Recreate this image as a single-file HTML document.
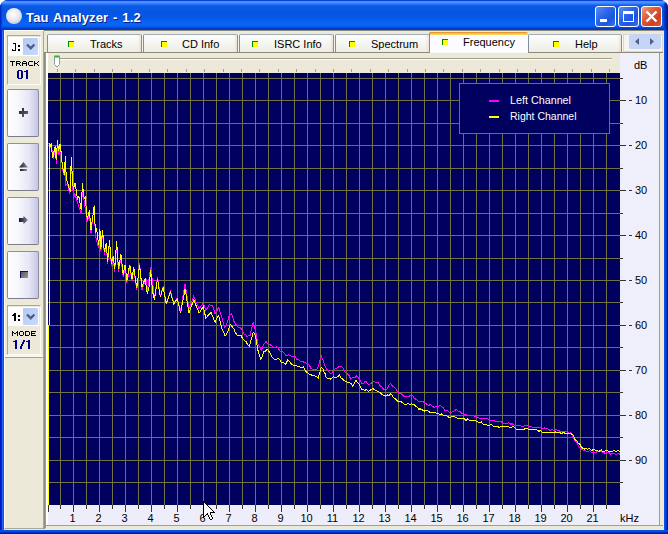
<!DOCTYPE html>
<html><head><meta charset="utf-8"><style>
*{margin:0;padding:0;box-sizing:border-box}
html,body{width:668px;height:534px;overflow:hidden;background:#fff;font-family:"Liberation Sans",sans-serif}
.a{position:absolute}
#win{position:absolute;left:0;top:0;width:668px;height:534px;border-radius:8px 8px 0 0;overflow:hidden;background:#0a4fe0}
#title{position:absolute;left:0;top:0;width:668px;height:30px;
 background:linear-gradient(180deg,#0a3fd8 0px,#0a3fd8 1px,#4592ff 1px,#4592ff 3px,#2a74f5 4px,#0b5ae6 6px,#0656e2 12px,#0658e6 18px,#0863f3 22px,#0a66f8 25px,#0556e8 27px,#0040d0 28px,#0036c0 30px)}
#frameL{position:absolute;left:0;top:30px;width:4px;height:504px;background:linear-gradient(90deg,#0019cf 0,#0019cf 1px,#0024d8 1px,#0024d8 2px,#2a6ae8 2px,#2a6ae8 3px,#0a54e4 3px)}
#frameR{position:absolute;left:664px;top:30px;width:4px;height:504px;background:linear-gradient(90deg,#0a54e4 0,#0a54e4 1px,#0648d8 1px,#0648d8 2px,#0030c8 2px,#0030c8 3px,#0019b0 3px)}
#frameB{position:absolute;left:0;top:530px;width:668px;height:4px;background:linear-gradient(180deg,#0a54e4 0,#0a54e4 1px,#0648d8 1px,#0648d8 2px,#0030c8 2px,#0030c8 3px,#0019b0 3px)}
#client{position:absolute;left:4px;top:30px;width:660px;height:500px;background:#ece9d8}
#ttl{position:absolute;left:26px;top:10px;font:bold 13px "Liberation Sans",sans-serif;color:#fff;text-shadow:1px 1px 0 #0a1e80;letter-spacing:0.15px;word-spacing:1px;white-space:pre}
.tbtn{position:absolute;top:6px;width:21px;height:21px;border:1px solid #fff;border-radius:3px;background:linear-gradient(135deg,#5a8cf8 0%,#2d66ea 40%,#1a55e0 70%,#3c72ea 100%)}
.tbtn.x{background:linear-gradient(135deg,#f0a080 0%,#e06040 35%,#d04020 70%,#d85a3a 100%)}
.tk{position:absolute;background:#333}
.lbl{position:absolute;font-size:11px;line-height:13px;color:#000;white-space:pre}
.lbl.c{text-align:center}
.stk{position:absolute;top:69px;width:1px;height:3px;background:#a0a090}
.tab{position:absolute;top:34px;height:18px;border:1px solid #7f8f9f;border-top-color:#a0aebb;border-bottom:none;border-radius:2px 2px 0 0;background:linear-gradient(180deg,#fdfdfd 0%,#f6f6f2 45%,#eeede7 100%);box-shadow:inset -3px 0 2px -1px rgba(235,200,160,0.35),1px 0 0 #f6f6f2}
.tab.sel{top:32px;height:21px;background:linear-gradient(180deg,#e89a32 0,#e89a32 1px,#fbbf3e 1px,#fbbf3e 2px,#fcd260 2px,#fcd260 3px,#fcfcfe 3px);border-color:#7f8f9f;border-top:none;border-right:none;border-radius:2px 2px 0 0;box-shadow:none}
.ticon{position:absolute;width:6px;height:6px;background:#ffff00;border-top:1px solid #008800;border-left:1px solid #008800}
.ttxt{position:absolute;font-size:11px;line-height:14px;color:#000;white-space:pre}
.btn{position:absolute;left:7px;width:32px;height:48px;border:1px solid #8e8e9e;border-bottom-color:#7c7c8c;border-radius:2px;background:linear-gradient(90deg,#fff 0%,#f6f6fc 35%,#e6e6f6 70%,#d2d2ec 88%,#c4c4e4 100%)}
.pix{position:absolute;font:bold 8px "Liberation Mono",monospace;color:#000;letter-spacing:0px}
</style></head><body>
<div id="win">
<div id="title"></div>
<div class="a" style="left:663px;top:3px;width:5px;height:27px;background:linear-gradient(90deg,rgba(0,40,190,0) 0,rgba(0,40,190,0.5) 1px,#0034c0 2px,#0026a8 3px,#001a90 5px)"></div>
<div class="a" style="left:0;top:4px;width:3px;height:26px;background:linear-gradient(90deg,#0028c8 0,#0028c8 1px,#0840dc 1px,#0840dc 2px,rgba(10,80,230,0.4) 2px,rgba(10,80,230,0) 3px)"></div>
<div id="frameL"></div><div id="frameR"></div><div id="frameB"></div>
<div id="client"></div>
<!-- title icon -->
<div class="a" style="left:6px;top:8px;width:16px;height:16px;border-radius:50%;background:radial-gradient(circle at 45% 40%,#fff 0%,#e8e8f0 45%,#b8b8c8 100%)"></div>
<div id="ttl">Tau Analyzer - 1.2</div>
<div class="tbtn" style="left:595px"><div class="a" style="left:4px;top:12px;width:7px;height:3px;background:#fff"></div></div>
<div class="tbtn" style="left:618px"><div class="a" style="left:4px;top:4px;width:11px;height:11px;border:1px solid #fff;border-top-width:3px"></div></div>
<div class="tbtn x" style="left:641px"><svg class="a" style="left:0;top:0" width="19" height="19"><path d="M4.5 4.5L14.5 14.5M14.5 4.5L4.5 14.5" stroke="#fff" stroke-width="2.4"/></svg></div>

<!-- left panel -->
<div class="a" style="left:4px;top:30px;width:40px;height:499px;border-left:1px solid #fff;border-top:1px solid #fff;border-right:1px solid #aca899;border-bottom:1px solid #aca899"></div>
<div class="a" style="left:7px;top:35px;width:34px;height:50px;border:1px solid #fbfaf3;border-left-color:#aca899;border-top-color:#aca899"></div>
<div class="a" style="left:8px;top:37px;width:31px;height:19px;background:#fff"></div>
<div class="a" style="left:23px;top:38px;width:15px;height:17px;background:linear-gradient(135deg,#b4c8f6,#c8dafc);border-radius:1px"></div>
<svg class="a" style="left:23px;top:38px" width="15" height="17"><path d="M4 6.5l3.7 3.7L11.4 6.5" stroke="#4d6185" stroke-width="2.4" fill="none"/></svg>
<svg class="a" style="left:0;top:0" width="24" height="60" shape-rendering="crispEdges" fill="#000"><path d="M13 43h3v1h-3z M15 44h1v7h-1z M12 50h3v1h-3z M12 49h1v1h-1z M18 45h1.6v2h-1.6z M18 49h1.6v2h-1.6z"/></svg>
<svg class="a" style="left:0;top:0" width="44" height="400" fill="#000" shape-rendering="crispEdges"><rect x="10" y="61" width="5" height="1"/><rect x="12" y="62" width="1" height="1"/><rect x="12" y="63" width="1" height="1"/><rect x="12" y="64" width="1" height="1"/><rect x="12" y="65" width="1" height="1"/><rect x="16" y="61" width="4" height="1"/><rect x="16" y="62" width="1" height="1"/><rect x="20" y="62" width="1" height="1"/><rect x="16" y="63" width="4" height="1"/><rect x="16" y="64" width="1" height="1"/><rect x="19" y="64" width="1" height="1"/><rect x="16" y="65" width="1" height="1"/><rect x="20" y="65" width="1" height="1"/><rect x="23" y="61" width="3" height="1"/><rect x="22" y="62" width="1" height="1"/><rect x="26" y="62" width="1" height="1"/><rect x="22" y="63" width="5" height="1"/><rect x="22" y="64" width="1" height="1"/><rect x="26" y="64" width="1" height="1"/><rect x="22" y="65" width="1" height="1"/><rect x="26" y="65" width="1" height="1"/><rect x="29" y="61" width="4" height="1"/><rect x="28" y="62" width="1" height="1"/><rect x="28" y="63" width="1" height="1"/><rect x="28" y="64" width="1" height="1"/><rect x="29" y="65" width="4" height="1"/><rect x="34" y="61" width="1" height="1"/><rect x="38" y="61" width="1" height="1"/><rect x="34" y="62" width="1" height="1"/><rect x="37" y="62" width="1" height="1"/><rect x="34" y="63" width="3" height="1"/><rect x="34" y="64" width="1" height="1"/><rect x="37" y="64" width="1" height="1"/><rect x="34" y="65" width="1" height="1"/><rect x="38" y="65" width="1" height="1"/></svg>
<svg class="a" style="left:0;top:0" width="44" height="400" fill="#00008a" shape-rendering="crispEdges"><rect x="18" y="70" width="4" height="1"/><rect x="17" y="71" width="2" height="1"/><rect x="21" y="71" width="2" height="1"/><rect x="17" y="72" width="2" height="1"/><rect x="21" y="72" width="2" height="1"/><rect x="17" y="73" width="2" height="1"/><rect x="21" y="73" width="2" height="1"/><rect x="17" y="74" width="2" height="1"/><rect x="21" y="74" width="2" height="1"/><rect x="17" y="75" width="2" height="1"/><rect x="21" y="75" width="2" height="1"/><rect x="17" y="76" width="2" height="1"/><rect x="21" y="76" width="2" height="1"/><rect x="17" y="77" width="2" height="1"/><rect x="21" y="77" width="2" height="1"/><rect x="18" y="78" width="4" height="1"/><rect x="26" y="70" width="2" height="1"/><rect x="24" y="71" width="4" height="1"/><rect x="26" y="72" width="2" height="1"/><rect x="26" y="73" width="2" height="1"/><rect x="26" y="74" width="2" height="1"/><rect x="26" y="75" width="2" height="1"/><rect x="26" y="76" width="2" height="1"/><rect x="26" y="77" width="2" height="1"/><rect x="26" y="78" width="2" height="1"/></svg>
<div class="btn" style="top:89px"><svg width="32" height="48" style="position:absolute;left:0;top:0"><defs><linearGradient id="gp" x1="0" y1="0" x2="1" y2="1"><stop offset="0" stop-color="#1a1a30"/><stop offset="1" stop-color="#707070"/></linearGradient></defs><path d="M11 21h9v3h-9z M14 18h2v9h-2z" fill="url(#gp)" shape-rendering="crispEdges"/></svg></div><div class="btn" style="top:143px"><svg width="32" height="48" style="position:absolute;left:0;top:0"><defs><linearGradient id="ge" x1="0" y1="0" x2="1" y2="0"><stop offset="0" stop-color="#181828"/><stop offset="1" stop-color="#909090"/></linearGradient></defs><path d="M15.5 18L20 23.5H11z" fill="url(#ge)"/><rect x="12" y="25" width="7" height="2" fill="url(#ge)"/></svg></div><div class="btn" style="top:197px"><svg width="32" height="48" style="position:absolute;left:0;top:0"><defs><linearGradient id="ga" x1="0" y1="0" x2="1" y2="0"><stop offset="0" stop-color="#10103a"/><stop offset="1" stop-color="#8a8a8a"/></linearGradient></defs><path d="M11 20H15.5V18L20 22L15.5 26V24H11z" fill="url(#ga)"/></svg></div><div class="btn" style="top:251px"><svg width="32" height="48" style="position:absolute;left:0;top:0" shape-rendering="crispEdges"><defs><linearGradient id="gs" x1="0" y1="0" x2="1" y2="1"><stop offset="0" stop-color="#505058"/><stop offset="1" stop-color="#9a9a9a"/></linearGradient></defs><rect x="12" y="19" width="8" height="7" fill="url(#gs)"/><path d="M12 19h8v1h-8z M12 19h1v7h-1z" fill="#10104a"/></svg></div>
<div class="a" style="left:7px;top:305px;width:34px;height:50px;border:1px solid #fbfaf3;border-left-color:#aca899;border-top-color:#aca899"></div>
<div class="a" style="left:8px;top:307px;width:31px;height:19px;background:#fff"></div>
<div class="a" style="left:23px;top:308px;width:15px;height:17px;background:linear-gradient(135deg,#b4c8f6,#c8dafc);border-radius:1px"></div>
<svg class="a" style="left:23px;top:308px" width="15" height="17"><path d="M4 6.5l3.7 3.7L11.4 6.5" stroke="#4d6185" stroke-width="2.4" fill="none"/></svg>
<svg class="a" style="left:0;top:0" width="24" height="330" shape-rendering="crispEdges" fill="#000"><path d="M14 313h2v8h-2z M13 314h1v2h-1z M12 315h1v1h-1z M18 315h2v2h-2z M18 319h2v2h-2z"/></svg>
<svg class="a" style="left:0;top:0" width="44" height="400" fill="#000" shape-rendering="crispEdges"><rect x="12" y="331" width="1" height="1"/><rect x="17" y="331" width="1" height="1"/><rect x="12" y="332" width="2" height="1"/><rect x="16" y="332" width="2" height="1"/><rect x="12" y="333" width="1" height="1"/><rect x="14" y="333" width="2" height="1"/><rect x="17" y="333" width="1" height="1"/><rect x="12" y="334" width="1" height="1"/><rect x="17" y="334" width="1" height="1"/><rect x="12" y="335" width="1" height="1"/><rect x="17" y="335" width="1" height="1"/><rect x="20" y="331" width="3" height="1"/><rect x="19" y="332" width="1" height="1"/><rect x="23" y="332" width="1" height="1"/><rect x="19" y="333" width="1" height="1"/><rect x="23" y="333" width="1" height="1"/><rect x="19" y="334" width="1" height="1"/><rect x="23" y="334" width="1" height="1"/><rect x="20" y="335" width="3" height="1"/><rect x="25" y="331" width="4" height="1"/><rect x="25" y="332" width="1" height="1"/><rect x="29" y="332" width="1" height="1"/><rect x="25" y="333" width="1" height="1"/><rect x="29" y="333" width="1" height="1"/><rect x="25" y="334" width="1" height="1"/><rect x="29" y="334" width="1" height="1"/><rect x="25" y="335" width="4" height="1"/><rect x="31" y="331" width="5" height="1"/><rect x="31" y="332" width="1" height="1"/><rect x="31" y="333" width="4" height="1"/><rect x="31" y="334" width="1" height="1"/><rect x="31" y="335" width="5" height="1"/></svg>
<svg class="a" style="left:0;top:0" width="44" height="400" fill="#00008a" shape-rendering="crispEdges"><rect x="15" y="340" width="2" height="1"/><rect x="13" y="341" width="4" height="1"/><rect x="15" y="342" width="2" height="1"/><rect x="15" y="343" width="2" height="1"/><rect x="15" y="344" width="2" height="1"/><rect x="15" y="345" width="2" height="1"/><rect x="15" y="346" width="2" height="1"/><rect x="15" y="347" width="2" height="1"/><rect x="15" y="348" width="2" height="1"/><rect x="23" y="340" width="2" height="1"/><rect x="23" y="341" width="2" height="1"/><rect x="22" y="342" width="2" height="1"/><rect x="22" y="343" width="2" height="1"/><rect x="21" y="344" width="2" height="1"/><rect x="21" y="345" width="2" height="1"/><rect x="20" y="346" width="2" height="1"/><rect x="20" y="347" width="2" height="1"/><rect x="20" y="348" width="2" height="1"/><rect x="28" y="340" width="2" height="1"/><rect x="26" y="341" width="4" height="1"/><rect x="28" y="342" width="2" height="1"/><rect x="28" y="343" width="2" height="1"/><rect x="28" y="344" width="2" height="1"/><rect x="28" y="345" width="2" height="1"/><rect x="28" y="346" width="2" height="1"/><rect x="28" y="347" width="2" height="1"/><rect x="28" y="348" width="2" height="1"/></svg>
<div class="a" style="left:5px;top:355px;width:38px;height:2px;background:#f8f7f0"></div><div class="a" style="left:5px;top:357px;width:38px;height:1px;background:#a5a290"></div>

<!-- tab control -->
<div class="a" style="left:44px;top:30px;width:620px;height:1px;background:#8c8a78"></div>
<div class="tab" style="left:47px;width:95px"></div><div class="ticon" style="left:68px;top:41px"></div><div class="ttxt" style="left:90px;top:37px">Tracks</div><div class="tab" style="left:143px;width:95px"></div><div class="ticon" style="left:161px;top:41px"></div><div class="ttxt" style="left:182px;top:37px">CD Info</div><div class="tab" style="left:239px;width:95px"></div><div class="ticon" style="left:252px;top:41px"></div><div class="ttxt" style="left:274px;top:37px">ISRC Info</div><div class="tab" style="left:335px;width:95px"></div><div class="ticon" style="left:349px;top:41px"></div><div class="ttxt" style="left:371px;top:37px">Spectrum</div><div class="tab" style="left:528px;width:94px"></div><div class="ticon" style="left:553px;top:41px"></div><div class="ttxt" style="left:575px;top:37px">Help</div><div class="tab sel" style="left:429px;width:99px"></div><div class="ticon" style="left:442px;top:39px"></div><div class="ttxt" style="left:463px;top:35px">Frequency</div>
<!-- tab scroller -->
<div class="a" style="left:623px;top:34px;width:40px;height:18px;border:1px solid #d8d8d0;background:#f4f4f0"></div>
<div class="a" style="left:629px;top:34px;width:32px;height:15px;background:#c6d4f6;border-radius:2px"></div>
<svg class="a" style="left:629px;top:34px" width="32" height="15"><path d="M10 4v7l-4-3.5z M21 4v7l4-3.5z" fill="#4d6185"/></svg>
<!-- tab page -->
<div class="a" style="left:44px;top:52px;width:619px;height:477px;border-top:1px solid #8c8a78;border-left:1px solid #8c8a78"></div>
<div class="a" style="left:45px;top:53px;width:617px;height:475px;background:#ece9d8;border-left:1px solid #a0a090"></div>
<div class="a" style="left:46px;top:53px;width:2px;height:473px;background:#fff"></div>
<div class="a" style="left:430px;top:52px;width:98px;height:1px;background:#f8f8f6"></div>
<!-- lavender axis panels -->
<div class="a" style="left:620px;top:53px;width:40px;height:473px;background:#efeffb;border-right:1px solid #a0a090"></div>
<div class="a" style="left:48px;top:505px;width:572px;height:21px;background:#eeeefa"></div>
<div class="a" style="left:44px;top:525px;width:619px;height:1px;background:#a0a090"></div>
<!-- slider -->
<div class="a" style="left:54px;top:58px;width:558px;height:2px;border-top:1px solid #9d9b8c;border-bottom:1px solid #fff;border-radius:1px"></div>
<div class="stk" style="left:57px"></div><div class="stk" style="left:75px"></div><div class="stk" style="left:94px"></div><div class="stk" style="left:112px"></div><div class="stk" style="left:131px"></div><div class="stk" style="left:149px"></div><div class="stk" style="left:167px"></div><div class="stk" style="left:186px"></div><div class="stk" style="left:204px"></div><div class="stk" style="left:223px"></div><div class="stk" style="left:241px"></div><div class="stk" style="left:259px"></div><div class="stk" style="left:278px"></div><div class="stk" style="left:296px"></div><div class="stk" style="left:315px"></div><div class="stk" style="left:333px"></div><div class="stk" style="left:351px"></div><div class="stk" style="left:370px"></div><div class="stk" style="left:388px"></div><div class="stk" style="left:407px"></div><div class="stk" style="left:425px"></div><div class="stk" style="left:443px"></div><div class="stk" style="left:462px"></div><div class="stk" style="left:480px"></div><div class="stk" style="left:499px"></div><div class="stk" style="left:517px"></div><div class="stk" style="left:535px"></div><div class="stk" style="left:554px"></div><div class="stk" style="left:572px"></div><div class="stk" style="left:591px"></div><div class="stk" style="left:609px"></div>
<svg class="a" style="left:53px;top:55px" width="8" height="13"><path d="M1.5 1.5h5v8l-2.5 2.5l-2.5-2.5z" fill="#fff" stroke="#8c9aa8"/><path d="M1.5 1.5h5" stroke="#2fb02f" stroke-width="2"/></svg>
<svg width="572" height="432" viewBox="48 73 572 432" style="position:absolute;left:48px;top:73px" shape-rendering="crispEdges"><rect x="48" y="73" width="572" height="432" fill="#00005e"/><path d="M48 78.5H620M48 100.5H620M48 123.5H620M48 145.5H620M48 168.5H620M48 190.5H620M48 213.5H620M48 235.5H620M48 258.5H620M48 280.5H620M48 302.5H620M48 325.5H620M48 347.5H620M48 370.5H620M48 392.5H620M48 415.5H620M48 437.5H620M48 460.5H620M48 482.5H620M60.5 73V505M73.5 73V505M86.5 73V505M99.5 73V505M112.5 73V505M125.5 73V505M138.5 73V505M151.5 73V505M164.5 73V505M177.5 73V505M190.5 73V505M203.5 73V505M216.5 73V505M229.5 73V505M242.5 73V505M255.5 73V505M268.5 73V505M281.5 73V505M294.5 73V505M307.5 73V505M320.5 73V505M333.5 73V505M346.5 73V505M359.5 73V505M372.5 73V505M385.5 73V505M398.5 73V505M411.5 73V505M424.5 73V505M437.5 73V505M450.5 73V505M463.5 73V505M476.5 73V505M489.5 73V505M502.5 73V505M515.5 73V505M528.5 73V505M541.5 73V505M554.5 73V505M567.5 73V505M580.5 73V505M593.5 73V505M606.5 73V505" stroke="#727244" stroke-width="1" fill="none"/><polyline points="48.5,143 50.6,147 52,150 53.2,158.8 55,150 56.5,164 57.5,145 59,155 60.2,147 62,163 63,171 64.3,175.9 65.5,160 65.7,185 67.6,184 69.6,194.2 71.3,162 72.2,177 73.5,200 74.8,193 77.5,203 81.2,213 82.4,190 84.2,201 87.2,222 89.4,213 91,233 94.2,205 95.4,236 98.7,248 99.9,231 100.9,251 102.6,232 104.4,255 106.3,245 107.6,264 109.5,243 111.4,266 113.2,258 114.7,272 116.6,244 118.5,272 120.9,257 123.2,277 125,267 126.9,283 129.7,267 132,281 133.8,270 136.8,290 139.6,263 141.9,290 145.1,281 146,279.4 147.3,291.2 150.7,266.8 154.4,298 157.5,276.9 160.3,296.3 163.2,286.2 166.2,303 170.4,291.2 173.8,303 177.2,298 180.6,310.6 185.1,283.7 189,308.9 193.7,296.3 199.1,308.9 203.3,303 205.8,310.6 209.2,304.7 212.6,305.6 215.1,314 216.9,310.6 218.8,307.2 220.7,314.5 222.5,319.7 224.4,327.5 226.2,324.8 228,320 229.0,316.5 230,315 231.5,313.5 232.6,316.8 233.7,321 234.8,322.4 236,324.7 237.1,325.7 238.2,327.7 239.7,327.5 241.2,328.4 242.7,331.4 244.2,334.4 245.7,334.5 247.2,336.7 248.7,335.4 250.2,335.2 251.7,327.9 253.2,322.5 254.3,325.8 255.4,330 256.6,336.2 257.7,343.4 259.5,347.2 261.4,350.1 262.9,346.1 264.4,343.7 265.9,341.2 267.8,343.7 269.7,344.2 271.5,345.7 273.4,347.2 274.9,347.9 276.4,346.7 277.9,347.9 279.8,350.8 281.6,351.6 283.1,352.1 284.6,353.6 286.1,356.1 288.0,354.8 289.9,355.4 291.8,356.2 293.6,356.1 295.1,356.6 296.6,359.1 298.5,359.8 300.4,361.4 302.2,361.8 304.1,362.1 306.0,362.8 307.8,364.4 309.3,365.2 310.8,368.1 312.3,369.4 313.8,369.6 315.7,369.2 317.6,368.9 319.5,362.0 321.3,356.1 323.2,360.5 325.1,365.9 326,367.7 327.5,370.2 329.0,371.7 330.5,373.7 332.0,372.9 333.5,370 335.4,368.9 337.2,367.7 338.7,366.9 340.2,366.2 341.7,366.9 343.2,368.5 345.1,372.1 347,373.7 348.9,375.4 350.7,379 352.5,377.8 354.4,377.5 355.5,377.2 356.7,376 357.8,376.5 358.9,379 360.4,381.2 361.9,383.4 363.4,383.9 364.9,381.5 366.4,382 367.9,384.1 369.4,384.2 370.9,383.7 372.4,381.7 373.9,381.2 375.4,382.2 376.9,382.2 378.4,382.7 380.2,385.9 382.1,387.2 384.0,389.7 385.9,390.2 387.4,388.4 388.9,385.2 390.4,383.4 392.2,385.8 394.1,387.2 395.9,388.7 397.6,391.7 399.4,393.2 400.9,393.2 402.3,394.7 403.8,396.2 405.3,396.4 406.8,396.2 408.3,396.9 409.8,395.9 411.3,395.9 412.8,395.4 414.3,398.3 415.8,399.2 417.3,400.4 418.8,401.7 420.3,401.4 422.2,401.2 424.1,402.4 426,403.7 427.4,404.9 428.9,405.2 430.4,404.7 432.0,406.1 433.6,407.1 435.1,407.1 436.7,406.0 438.3,406.8 439.9,405.2 441.5,406.4 443.0,407.5 444.6,410.2 446.2,410.2 447.8,410.3 449.3,412.8 450.9,412.4 452.8,411.9 454.6,410.8 456.5,409.3 458.3,411.2 460.1,411.5 461.9,413.4 463.8,413.9 465.8,414.5 467.8,415.6 469.7,415.6 471.7,416.0 473.6,415.4 475.6,416.8 477.6,417.2 479.6,418.1 481.5,418.4 483.4,418.3 485.4,418.7 487.4,418.6 489.4,420.0 491.3,420.9 493.3,420.3 495.3,421.2 497.2,422.1 499.2,421.0 501.2,421.9 503.1,423.3 505.0,423.3 506.8,423.7 508.7,422.7 510.6,424.1 512.5,423.9 514.4,425.2 516.2,425.0 518.1,425.8 520,425.6 521.9,426.3 523.8,426.0 525.7,425.7 527.6,425.4 529.5,426.6 531.4,426.3 533.3,428.0 535.1,427.6 537.0,427.8 538.9,427.5 540.8,427.8 542.7,428.6 544.5,428.0 546.4,428.3 548.3,429.1 550.2,430.4 552.1,429.1 554.0,430.9 555.9,429.1 557.8,430.4 559.7,431.1 561.6,431.3 563.4,431.4 565.3,431.6 567.2,431.3 569.1,433.1 571,432.9 572.3,435.0 573.7,438.6 575,440.7 576.6,442.1 578.2,445.6 579.8,448 581.3,448.8 582.9,450.1 584.5,450.8 586,451.1 587.9,451.4 589.8,450.6 591.7,452.4 593.6,453.1 595.5,452.4 597.4,451.6 599.3,451.8 601.1,451.9 603.0,452.1 604.9,453.3 606.9,452.8 608.8,452.3 610.8,454.3 612.8,453.3 614.6,453.6 616.4,454.8 618.2,453.1 620,454.3" fill="none" stroke="#ff00ff" stroke-width="1" shape-rendering="crispEdges"/><polyline points="48.5,143 49.9,143.1 50.6,147 51.5,143.1 52.3,157.5 53.2,156.2 54.1,151 55.2,145.7 56.2,160.1 57.5,140.5 58.5,151 59.4,147 60.2,143.8 61.1,152.3 62,161.5 63,169.3 64.3,174.6 65.4,155.6 66.3,179.8 67.6,182.4 68.9,187.7 70.2,191.6 71.3,157.5 72.2,174.6 73.3,189.5 75.2,182.7 77.5,200 78.8,196 81.2,210.4 82.4,183.5 84.2,198.5 85.2,197 87.2,219.4 89.4,210.4 91,230 94.2,206 95.4,233 96.5,228 98.7,245 99.9,229.2 100.9,248.7 102.6,230 104.4,252.4 106.3,243.1 107.6,261.8 109.5,240.3 111.4,263.7 113.2,256.2 114.7,269.3 116.6,241.2 118.5,269.3 120.9,254.3 123.2,274.9 125,264.6 126.9,280.5 129.7,264.6 132,278.7 133.8,267.4 136.8,288 139.6,264.6 141.9,287.1 145.1,278.7 147.3,293.8 149,287 150.7,270.2 152.7,292.1 154.4,299.7 157.5,278.6 160.3,297.1 163.2,287 166.2,303.9 170.4,292.1 173.8,303.9 177.2,298.8 180.6,313.1 185.1,288.7 189,313.1 193.7,299.7 199.1,313.1 203.3,306.4 205.8,318.2 210.9,312.3 215.1,322.4 216.8,318.0 218.5,315.7 220.2,321.4 222,329 223.4,331.4 224.9,335.9 226.4,334.4 228,331 229.0,327.9 230,324.7 231.5,325.4 232.6,327.9 233.7,328.4 235.2,332.4 236.7,334.4 237.8,335.6 239,335.9 240.1,335.9 241.2,335.9 242.7,338.6 244.2,340.4 246.0,341.4 247.7,344.9 249.5,346.4 251.3,339.3 253.2,332.2 254.3,333.5 255.4,335.9 256.6,342.1 257.7,349.4 259.2,354.8 260.7,359.1 262.2,356.4 263.7,351.6 265.5,351.0 267.4,349.4 269.3,351.9 271.2,355.4 272.7,357.8 274.2,359.1 276.0,359.8 277.9,358.4 279.8,359.6 281.6,362.9 283.5,362.6 285.4,364.4 286.5,363.1 287.6,359.9 289.1,360.9 290.6,362.9 292.5,365.0 294.4,365.1 296.2,365.4 298.1,366.6 300.0,366.9 301.9,368.1 303.4,366.6 304.9,369.8 306.3,371.9 307.8,372.9 309.3,374.4 310.8,374.9 312.7,375.2 314.6,375.6 316.5,376.7 318.3,377.8 319.8,372.6 321.3,367.4 322.8,368.9 324.3,372.4 325.8,374.9 326,376.7 327.5,378.5 329.0,378.2 330.5,379 332.0,377.9 333.5,376.7 335.0,377.6 336.5,377.5 338.0,376.5 339.5,374.5 341.0,377.8 342.5,379 344.0,380.5 345.5,381.5 347,382 348.9,382.7 350.7,383.4 351.8,384.4 352.9,386.4 354.4,382.9 355.9,380.4 357.4,382.4 358.9,383.4 360.4,387.4 361.9,389.4 363.4,389.9 364.9,390.4 366.4,389.4 367.9,391.1 369.4,390.9 371.3,389.3 373.2,388.7 374.6,389.8 376.1,390.9 377.6,391.2 379.1,391.9 380.6,393.2 382.4,394.7 384.1,395.2 385.9,396.2 387.4,394.9 388.9,395.7 390.4,393.9 391.9,394.9 393.4,397.4 394.9,398.4 396.4,399.9 397.9,401.4 399.4,401.4 400.9,401.7 402.3,402.4 403.8,403.7 405.3,404.7 406.8,404.2 408.3,403.7 409.8,404.4 411.3,403.7 412.8,404.4 414.3,404.9 415.8,406.4 417.3,407.4 418.8,409.1 420.3,408.9 421.8,409.6 423.2,410.4 424.6,411.1 426,410.4 427.4,410.4 428.9,411.5 430.4,412.7 432.0,412.9 433.6,412.7 435.1,412.4 436.7,413.3 438.2,413.7 439.8,414.1 441.4,414 443.0,415.1 444.5,415.8 446.1,415.4 447.7,416.5 449.7,417.7 451.6,416.9 453.6,416.5 455.6,417.2 457.2,418.1 458.8,418.9 460.3,418.8 461.9,418.7 463.8,418.1 465.8,420.5 467.8,418.9 469.7,420.3 471.7,420.7 473.6,420.1 475.6,420.5 477.6,421.9 479.6,422.9 481.5,422.0 483.4,424.6 485.4,424.1 487.4,425.1 489.4,425.1 491.3,424.5 493.3,426 495.3,426.6 497.2,426.3 499.2,427.5 501.2,426.6 503.1,426.8 505.0,427.0 506.8,426.1 508.7,426.8 510.6,427.5 512.5,426.8 514.4,427.1 516.2,429.5 518.1,429.8 520,429.1 521.9,429.2 523.8,429.3 525.7,428.5 527.6,428.6 529.5,429.7 531.4,429.0 533.3,429.3 535.1,429.7 537.0,430.0 538.9,431.3 540.8,430.5 542.7,432.7 544.5,432.8 546.4,432.0 548.3,432.2 550.2,432.3 552.1,432.5 554.0,433.1 555.9,431.8 557.8,432.9 559.7,432.5 561.6,433.6 563.4,432.3 565.3,433.4 567.2,433.5 568.8,433.8 570.3,433.1 571.9,434.4 573.5,435.5 575.0,439.6 576.6,440.7 578.2,443.3 579.7,443.9 581.3,447 582.9,448.6 584.5,449.1 586.0,448.1 587.6,449.2 589.6,448.4 591.5,450.7 593.5,449.4 595.5,450.2 597.4,450.9 599.3,451.1 601.1,449.7 603.0,451.9 604.9,451.1 606.9,450.6 608.8,451.6 610.8,451.1 612.8,451.1 614.6,450.8 616.4,451.4 618.2,450.6 620,451.7" fill="none" stroke="#ffff00" stroke-width="1" shape-rendering="crispEdges"/><rect x="49" y="143" width="1" height="182" fill="#ffff00"/><rect x="48" y="325" width="1" height="180" fill="#ffff00"/><rect x="49" y="325" width="1" height="1" fill="#ff00ff"/><rect x="459.5" y="83.5" width="150" height="50" fill="#00005e" stroke="#727244" stroke-width="1"/><rect x="489" y="100" width="10" height="2" fill="#ff00ff"/><rect x="489" y="116" width="10" height="2" fill="#ffff00"/><text x="510" y="104" fill="#fff" font-family="Liberation Sans" font-size="11" textLength="61" lengthAdjust="spacingAndGlyphs">Left Channel</text><text x="510" y="120" fill="#fff" font-family="Liberation Sans" font-size="11" textLength="66.5" lengthAdjust="spacingAndGlyphs">Right Channel</text></svg>
<div class="tk" style="left:620px;top:78px;width:3px;height:1px"></div><div class="tk" style="left:620px;top:100px;width:6px;height:1px"></div><div class="tk" style="left:620px;top:123px;width:3px;height:1px"></div><div class="tk" style="left:620px;top:145px;width:6px;height:1px"></div><div class="tk" style="left:620px;top:168px;width:3px;height:1px"></div><div class="tk" style="left:620px;top:190px;width:6px;height:1px"></div><div class="tk" style="left:620px;top:213px;width:3px;height:1px"></div><div class="tk" style="left:620px;top:235px;width:6px;height:1px"></div><div class="tk" style="left:620px;top:258px;width:3px;height:1px"></div><div class="tk" style="left:620px;top:280px;width:6px;height:1px"></div><div class="tk" style="left:620px;top:302px;width:3px;height:1px"></div><div class="tk" style="left:620px;top:325px;width:6px;height:1px"></div><div class="tk" style="left:620px;top:347px;width:3px;height:1px"></div><div class="tk" style="left:620px;top:370px;width:6px;height:1px"></div><div class="tk" style="left:620px;top:392px;width:3px;height:1px"></div><div class="tk" style="left:620px;top:415px;width:6px;height:1px"></div><div class="tk" style="left:620px;top:437px;width:3px;height:1px"></div><div class="tk" style="left:620px;top:460px;width:6px;height:1px"></div><div class="tk" style="left:620px;top:482px;width:3px;height:1px"></div><div class="tk" style="left:629px;top:100px;width:3px;height:1px"></div><div class="lbl" style="left:635px;top:94px">10</div><div class="tk" style="left:629px;top:145px;width:3px;height:1px"></div><div class="lbl" style="left:635px;top:139px">20</div><div class="tk" style="left:629px;top:190px;width:3px;height:1px"></div><div class="lbl" style="left:635px;top:184px">30</div><div class="tk" style="left:629px;top:235px;width:3px;height:1px"></div><div class="lbl" style="left:635px;top:229px">40</div><div class="tk" style="left:629px;top:280px;width:3px;height:1px"></div><div class="lbl" style="left:635px;top:274px">50</div><div class="tk" style="left:629px;top:325px;width:3px;height:1px"></div><div class="lbl" style="left:635px;top:319px">60</div><div class="tk" style="left:629px;top:370px;width:3px;height:1px"></div><div class="lbl" style="left:635px;top:364px">70</div><div class="tk" style="left:629px;top:415px;width:3px;height:1px"></div><div class="lbl" style="left:635px;top:409px">80</div><div class="tk" style="left:629px;top:460px;width:3px;height:1px"></div><div class="lbl" style="left:635px;top:454px">90</div><div class="lbl" style="left:634px;top:59px">dB</div><div class="tk" style="left:48px;top:505px;width:1px;height:7px"></div><div class="tk" style="left:60px;top:505px;width:1px;height:4px"></div><div class="tk" style="left:73px;top:505px;width:1px;height:7px"></div><div class="lbl c" style="left:62px;top:512px;width:21px">1</div><div class="tk" style="left:86px;top:505px;width:1px;height:4px"></div><div class="tk" style="left:99px;top:505px;width:1px;height:7px"></div><div class="lbl c" style="left:88px;top:512px;width:21px">2</div><div class="tk" style="left:112px;top:505px;width:1px;height:4px"></div><div class="tk" style="left:125px;top:505px;width:1px;height:7px"></div><div class="lbl c" style="left:114px;top:512px;width:21px">3</div><div class="tk" style="left:138px;top:505px;width:1px;height:4px"></div><div class="tk" style="left:151px;top:505px;width:1px;height:7px"></div><div class="lbl c" style="left:140px;top:512px;width:21px">4</div><div class="tk" style="left:164px;top:505px;width:1px;height:4px"></div><div class="tk" style="left:177px;top:505px;width:1px;height:7px"></div><div class="lbl c" style="left:166px;top:512px;width:21px">5</div><div class="tk" style="left:190px;top:505px;width:1px;height:4px"></div><div class="tk" style="left:203px;top:505px;width:1px;height:7px"></div><div class="lbl c" style="left:192px;top:512px;width:21px">6</div><div class="tk" style="left:216px;top:505px;width:1px;height:4px"></div><div class="tk" style="left:229px;top:505px;width:1px;height:7px"></div><div class="lbl c" style="left:218px;top:512px;width:21px">7</div><div class="tk" style="left:242px;top:505px;width:1px;height:4px"></div><div class="tk" style="left:255px;top:505px;width:1px;height:7px"></div><div class="lbl c" style="left:244px;top:512px;width:21px">8</div><div class="tk" style="left:268px;top:505px;width:1px;height:4px"></div><div class="tk" style="left:281px;top:505px;width:1px;height:7px"></div><div class="lbl c" style="left:270px;top:512px;width:21px">9</div><div class="tk" style="left:294px;top:505px;width:1px;height:4px"></div><div class="tk" style="left:307px;top:505px;width:1px;height:7px"></div><div class="lbl c" style="left:296px;top:512px;width:21px">10</div><div class="tk" style="left:320px;top:505px;width:1px;height:4px"></div><div class="tk" style="left:333px;top:505px;width:1px;height:7px"></div><div class="lbl c" style="left:322px;top:512px;width:21px">11</div><div class="tk" style="left:346px;top:505px;width:1px;height:4px"></div><div class="tk" style="left:359px;top:505px;width:1px;height:7px"></div><div class="lbl c" style="left:348px;top:512px;width:21px">12</div><div class="tk" style="left:372px;top:505px;width:1px;height:4px"></div><div class="tk" style="left:385px;top:505px;width:1px;height:7px"></div><div class="lbl c" style="left:374px;top:512px;width:21px">13</div><div class="tk" style="left:398px;top:505px;width:1px;height:4px"></div><div class="tk" style="left:411px;top:505px;width:1px;height:7px"></div><div class="lbl c" style="left:400px;top:512px;width:21px">14</div><div class="tk" style="left:424px;top:505px;width:1px;height:4px"></div><div class="tk" style="left:437px;top:505px;width:1px;height:7px"></div><div class="lbl c" style="left:426px;top:512px;width:21px">15</div><div class="tk" style="left:450px;top:505px;width:1px;height:4px"></div><div class="tk" style="left:463px;top:505px;width:1px;height:7px"></div><div class="lbl c" style="left:452px;top:512px;width:21px">16</div><div class="tk" style="left:476px;top:505px;width:1px;height:4px"></div><div class="tk" style="left:489px;top:505px;width:1px;height:7px"></div><div class="lbl c" style="left:478px;top:512px;width:21px">17</div><div class="tk" style="left:502px;top:505px;width:1px;height:4px"></div><div class="tk" style="left:515px;top:505px;width:1px;height:7px"></div><div class="lbl c" style="left:504px;top:512px;width:21px">18</div><div class="tk" style="left:528px;top:505px;width:1px;height:4px"></div><div class="tk" style="left:541px;top:505px;width:1px;height:7px"></div><div class="lbl c" style="left:530px;top:512px;width:21px">19</div><div class="tk" style="left:554px;top:505px;width:1px;height:4px"></div><div class="tk" style="left:567px;top:505px;width:1px;height:7px"></div><div class="lbl c" style="left:556px;top:512px;width:21px">20</div><div class="tk" style="left:580px;top:505px;width:1px;height:4px"></div><div class="tk" style="left:593px;top:505px;width:1px;height:7px"></div><div class="lbl c" style="left:582px;top:512px;width:21px">21</div><div class="tk" style="left:606px;top:505px;width:1px;height:4px"></div><div class="lbl" style="left:620px;top:512px">kHz</div>
<svg class="a" style="left:203px;top:501px" width="12" height="19" shape-rendering="crispEdges"><rect x="0" y="0" width="1" height="1" fill="#000"/><rect x="0" y="1" width="1" height="1" fill="#000"/><rect x="1" y="1" width="1" height="1" fill="#000"/><rect x="0" y="2" width="1" height="1" fill="#000"/><rect x="1" y="2" width="1" height="1" fill="#fff"/><rect x="2" y="2" width="1" height="1" fill="#000"/><rect x="0" y="3" width="1" height="1" fill="#000"/><rect x="1" y="3" width="1" height="1" fill="#fff"/><rect x="2" y="3" width="1" height="1" fill="#fff"/><rect x="3" y="3" width="1" height="1" fill="#000"/><rect x="0" y="4" width="1" height="1" fill="#000"/><rect x="1" y="4" width="1" height="1" fill="#fff"/><rect x="2" y="4" width="1" height="1" fill="#fff"/><rect x="3" y="4" width="1" height="1" fill="#fff"/><rect x="4" y="4" width="1" height="1" fill="#000"/><rect x="0" y="5" width="1" height="1" fill="#000"/><rect x="1" y="5" width="1" height="1" fill="#fff"/><rect x="2" y="5" width="1" height="1" fill="#fff"/><rect x="3" y="5" width="1" height="1" fill="#fff"/><rect x="4" y="5" width="1" height="1" fill="#fff"/><rect x="5" y="5" width="1" height="1" fill="#000"/><rect x="0" y="6" width="1" height="1" fill="#000"/><rect x="1" y="6" width="1" height="1" fill="#fff"/><rect x="2" y="6" width="1" height="1" fill="#fff"/><rect x="3" y="6" width="1" height="1" fill="#fff"/><rect x="4" y="6" width="1" height="1" fill="#fff"/><rect x="5" y="6" width="1" height="1" fill="#fff"/><rect x="6" y="6" width="1" height="1" fill="#000"/><rect x="0" y="7" width="1" height="1" fill="#000"/><rect x="1" y="7" width="1" height="1" fill="#fff"/><rect x="2" y="7" width="1" height="1" fill="#fff"/><rect x="3" y="7" width="1" height="1" fill="#fff"/><rect x="4" y="7" width="1" height="1" fill="#fff"/><rect x="5" y="7" width="1" height="1" fill="#fff"/><rect x="6" y="7" width="1" height="1" fill="#fff"/><rect x="7" y="7" width="1" height="1" fill="#000"/><rect x="0" y="8" width="1" height="1" fill="#000"/><rect x="1" y="8" width="1" height="1" fill="#fff"/><rect x="2" y="8" width="1" height="1" fill="#fff"/><rect x="3" y="8" width="1" height="1" fill="#fff"/><rect x="4" y="8" width="1" height="1" fill="#fff"/><rect x="5" y="8" width="1" height="1" fill="#fff"/><rect x="6" y="8" width="1" height="1" fill="#fff"/><rect x="7" y="8" width="1" height="1" fill="#fff"/><rect x="8" y="8" width="1" height="1" fill="#000"/><rect x="0" y="9" width="1" height="1" fill="#000"/><rect x="1" y="9" width="1" height="1" fill="#fff"/><rect x="2" y="9" width="1" height="1" fill="#fff"/><rect x="3" y="9" width="1" height="1" fill="#fff"/><rect x="4" y="9" width="1" height="1" fill="#fff"/><rect x="5" y="9" width="1" height="1" fill="#fff"/><rect x="6" y="9" width="1" height="1" fill="#fff"/><rect x="7" y="9" width="1" height="1" fill="#fff"/><rect x="8" y="9" width="1" height="1" fill="#fff"/><rect x="9" y="9" width="1" height="1" fill="#000"/><rect x="0" y="10" width="1" height="1" fill="#000"/><rect x="1" y="10" width="1" height="1" fill="#fff"/><rect x="2" y="10" width="1" height="1" fill="#fff"/><rect x="3" y="10" width="1" height="1" fill="#fff"/><rect x="4" y="10" width="1" height="1" fill="#fff"/><rect x="5" y="10" width="1" height="1" fill="#fff"/><rect x="6" y="10" width="1" height="1" fill="#fff"/><rect x="7" y="10" width="1" height="1" fill="#fff"/><rect x="8" y="10" width="1" height="1" fill="#fff"/><rect x="9" y="10" width="1" height="1" fill="#fff"/><rect x="10" y="10" width="1" height="1" fill="#000"/><rect x="0" y="11" width="1" height="1" fill="#000"/><rect x="1" y="11" width="1" height="1" fill="#fff"/><rect x="2" y="11" width="1" height="1" fill="#fff"/><rect x="3" y="11" width="1" height="1" fill="#fff"/><rect x="4" y="11" width="1" height="1" fill="#fff"/><rect x="5" y="11" width="1" height="1" fill="#fff"/><rect x="6" y="11" width="1" height="1" fill="#fff"/><rect x="7" y="11" width="1" height="1" fill="#000"/><rect x="8" y="11" width="1" height="1" fill="#000"/><rect x="9" y="11" width="1" height="1" fill="#000"/><rect x="10" y="11" width="1" height="1" fill="#000"/><rect x="11" y="11" width="1" height="1" fill="#000"/><rect x="0" y="12" width="1" height="1" fill="#000"/><rect x="1" y="12" width="1" height="1" fill="#fff"/><rect x="2" y="12" width="1" height="1" fill="#fff"/><rect x="3" y="12" width="1" height="1" fill="#fff"/><rect x="4" y="12" width="1" height="1" fill="#000"/><rect x="5" y="12" width="1" height="1" fill="#fff"/><rect x="6" y="12" width="1" height="1" fill="#fff"/><rect x="7" y="12" width="1" height="1" fill="#000"/><rect x="0" y="13" width="1" height="1" fill="#000"/><rect x="1" y="13" width="1" height="1" fill="#fff"/><rect x="2" y="13" width="1" height="1" fill="#fff"/><rect x="3" y="13" width="1" height="1" fill="#000"/><rect x="4" y="13" width="1" height="1" fill="#000"/><rect x="5" y="13" width="1" height="1" fill="#fff"/><rect x="6" y="13" width="1" height="1" fill="#fff"/><rect x="7" y="13" width="1" height="1" fill="#000"/><rect x="0" y="14" width="1" height="1" fill="#000"/><rect x="1" y="14" width="1" height="1" fill="#fff"/><rect x="2" y="14" width="1" height="1" fill="#000"/><rect x="5" y="14" width="1" height="1" fill="#000"/><rect x="6" y="14" width="1" height="1" fill="#fff"/><rect x="7" y="14" width="1" height="1" fill="#fff"/><rect x="8" y="14" width="1" height="1" fill="#000"/><rect x="0" y="15" width="1" height="1" fill="#000"/><rect x="1" y="15" width="1" height="1" fill="#000"/><rect x="5" y="15" width="1" height="1" fill="#000"/><rect x="6" y="15" width="1" height="1" fill="#fff"/><rect x="7" y="15" width="1" height="1" fill="#fff"/><rect x="8" y="15" width="1" height="1" fill="#000"/><rect x="0" y="16" width="1" height="1" fill="#000"/><rect x="6" y="16" width="1" height="1" fill="#000"/><rect x="7" y="16" width="1" height="1" fill="#fff"/><rect x="8" y="16" width="1" height="1" fill="#fff"/><rect x="9" y="16" width="1" height="1" fill="#000"/><rect x="6" y="17" width="1" height="1" fill="#000"/><rect x="7" y="17" width="1" height="1" fill="#fff"/><rect x="8" y="17" width="1" height="1" fill="#fff"/><rect x="9" y="17" width="1" height="1" fill="#000"/><rect x="7" y="18" width="1" height="1" fill="#000"/><rect x="8" y="18" width="1" height="1" fill="#000"/></svg>
</div>
</body></html>
